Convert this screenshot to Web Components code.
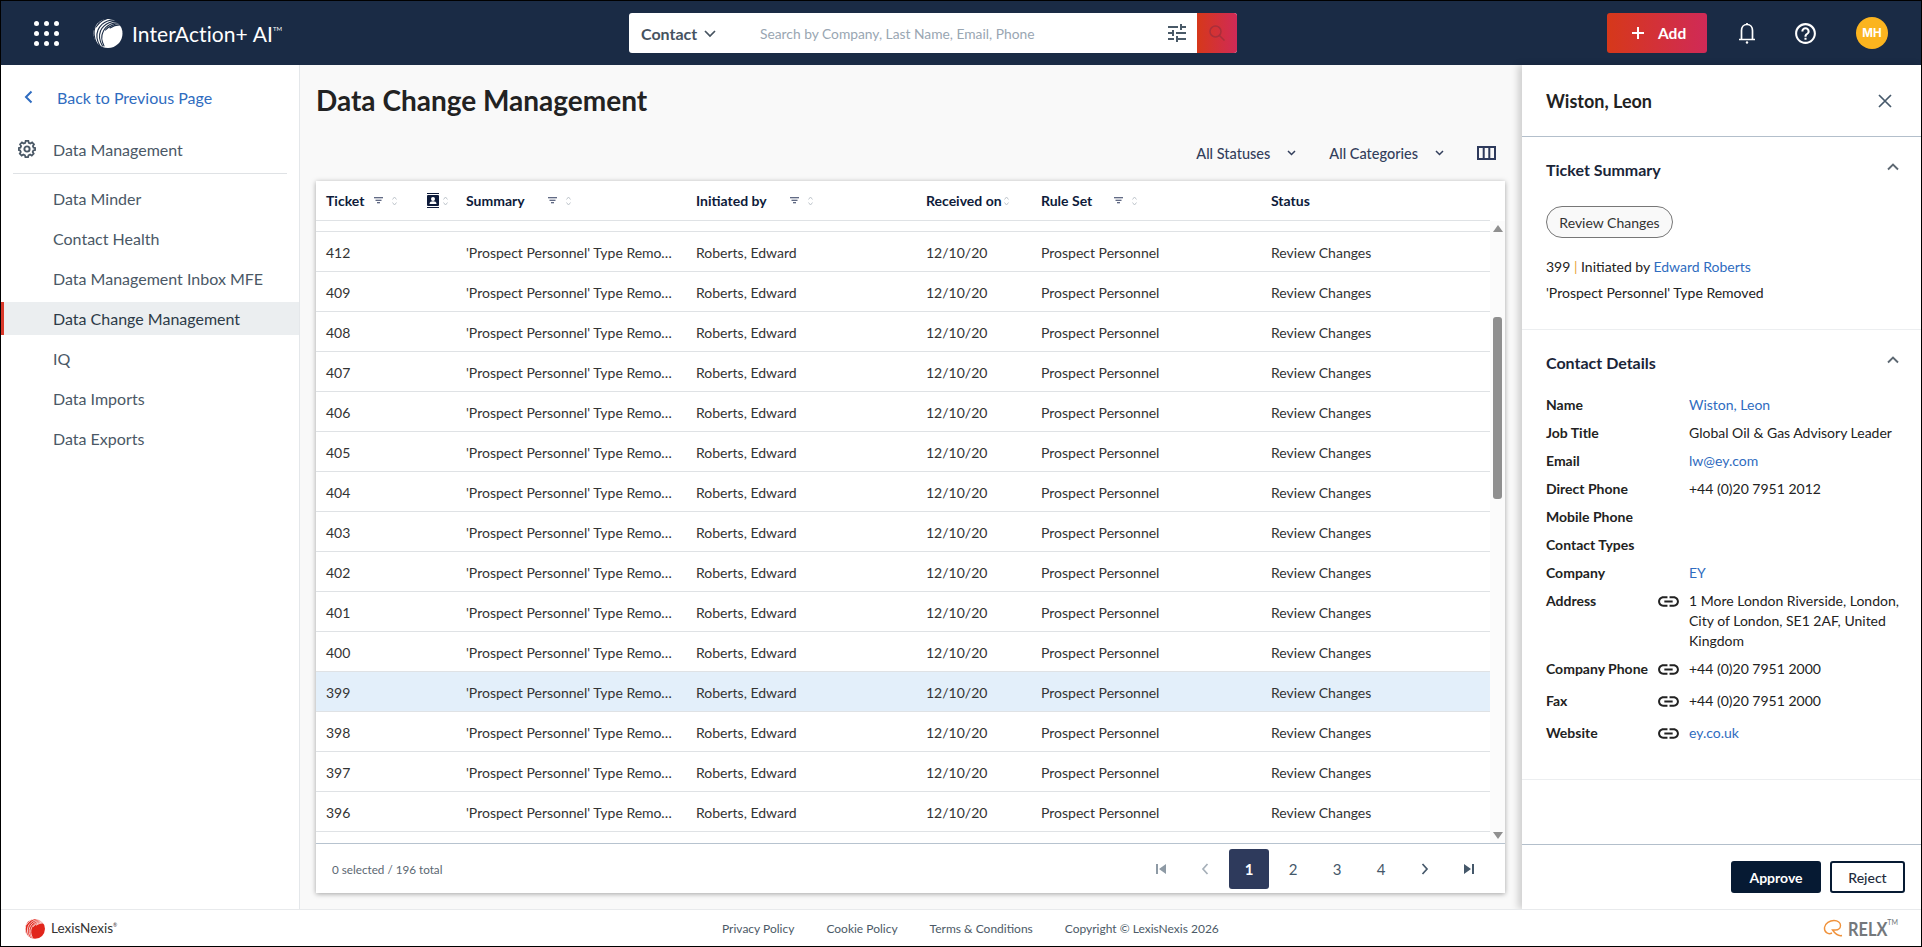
<!DOCTYPE html>
<html lang="en"><head><meta charset="utf-8"><title>Data Change Management</title>
<style>
html,body{margin:0;padding:0;height:947px;overflow:hidden;font-family:Lato,"Noto Sans",sans-serif;font-size:14px;color:#222}
</style></head><body>
<app-shell>
  <app-header slot="header"></app-header>
  <side-nav slot="nav">
    <nav-item>Data Minder</nav-item>
    <nav-item>Contact Health</nav-item>
    <nav-item>Data Management Inbox MFE</nav-item>
    <nav-item active>Data Change Management</nav-item>
    <nav-item>IQ</nav-item>
    <nav-item>Data Imports</nav-item>
    <nav-item>Data Exports</nav-item>
  </side-nav>
  <main-area slot="main">
    <ticket-table id="tbl"></ticket-table>
  </main-area>
  <detail-panel slot="panel">
    <panel-section heading="Ticket Summary" style="--sec-h:193px;--pad:24px">
      <status-pill>Review Changes</status-pill>
      <summary-line>399 <span style="color:#e8a33d">|</span> Initiated by <a style="color:#2f6cc0">Edward Roberts</a></summary-line>
      <summary-line>'Prospect Personnel' Type Removed</summary-line>
    </panel-section>
    <panel-section heading="Contact Details" style="--sec-h:450px;--pad:20px">
      <detail-row label="Name"><a style="color:#2f6cc0">Wiston, Leon</a></detail-row>
      <detail-row label="Job Title">Global Oil &amp; Gas Advisory Leader</detail-row>
      <detail-row label="Email"><a style="color:#2f6cc0">lw@ey.com</a></detail-row>
      <detail-row label="Direct Phone">+44 (0)20 7951 2012</detail-row>
      <detail-row label="Mobile Phone"></detail-row>
      <detail-row label="Contact Types"></detail-row>
      <detail-row label="Company"><a style="color:#2f6cc0">EY</a></detail-row>
      <detail-row label="Address" link>1 More London Riverside, London, City of London, SE1 2AF, United Kingdom</detail-row>
      <detail-row label="Company Phone" link tall>+44 (0)20 7951 2000</detail-row>
      <detail-row label="Fax" link tall>+44 (0)20 7951 2000</detail-row>
      <detail-row label="Website" link tall><a style="color:#2f6cc0">ey.co.uk</a></detail-row>
    </panel-section>
  </detail-panel>
  <app-footer slot="footer"></app-footer>
</app-shell>
<script>
function def(name, html, setup){
  customElements.define(name, class extends HTMLElement{
    constructor(){super();this.attachShadow({mode:'open'}).innerHTML=html;}
    connectedCallback(){ if(setup&&!this._d){this._d=1;setup(this,this.shadowRoot);} }
  });
}
const globe=(fill,cut)=>`<svg viewBox="0 0 32 32" width="100%" height="100%"><circle cx="16" cy="16.5" r="14.5" fill="${fill}"/><g fill="none" stroke="${cut}" stroke-width="1.1" stroke-linecap="round"><path d="M29 4C20 1 10 4 6 13c-2 5-1 11 2 16"/><path d="M29 5C21 3 12 6 8.500 14c-2 5-1 10 2 15"/><path d="M29 6C22 4.500 14 8 11 15c-2 4-1.500 9 1 14"/><path d="M29 7C24 6 17 9 13.500 13"/><path d="M3 10C1.500 14 1.500 21 5 27"/><path d="M29 8C25 7.500 21 9 18 11"/><path d="M20 1C14 1 8 4 4 10"/></g></svg>`;
def('app-shell',`<style>
:host{display:grid;box-sizing:border-box;width:1922px;height:947px;border:1px solid #000;grid-template-rows:64px 844px 37px;grid-template-columns:299px 1fr 399px;background:#fff}
::slotted([slot=header]),::slotted([slot=footer]){grid-column:1/-1}
</style><slot name="header"></slot><slot name="nav"></slot><slot name="main"></slot><slot name="panel"></slot><slot name="footer"></slot>`);

def('app-header',`<style>
:host{display:flex;align-items:center;background:#1a2b45;height:64px;color:#fff;position:relative}
.grid{display:grid;grid-template-columns:repeat(3,5px);gap:5px;margin-left:33px;width:25px}
.grid i{width:5px;height:5px;border-radius:50%;background:#fff}
.logo{width:32px;height:32px;margin-left:33px}
.brand{font-size:21px;letter-spacing:.1px;margin-left:8px;line-height:1;white-space:nowrap;width:497px}
.brand sup{font-size:6px;vertical-align:11px;line-height:0}
.search{display:flex;width:608px;height:40px;background:#fff;border-radius:3px;overflow:hidden;align-items:center;color:#4a5a68}
.ct{font-size:16px;font-weight:700;color:#46535f;margin-left:12px;width:62px}
.chev{width:14px;height:9px}
.ph{font-size:13.800px;color:#99a6b2;margin-left:43px;width:405px;white-space:nowrap}
.tune{width:24px;height:24px}
.go{margin-left:auto;width:40px;height:40px;background:linear-gradient(90deg,#d6381a,#d02a57);display:flex;align-items:center;justify-content:center}
.add{display:flex;align-items:center;height:40px;width:100px;margin-left:370px;background:linear-gradient(90deg,#d6381a,#d02a57);border-radius:3px;font-weight:700;font-size:15.500px;box-sizing:border-box;padding-left:24px}
.add svg{margin-right:13px}
.bell{margin-left:28px;width:24px;height:24px}
.help{margin-left:34px;width:25px;height:25px}
.av{margin-left:38px;width:32px;height:32px;border-radius:50%;background:#fbb41f;font:700 11.500px Inter,sans-serif;display:flex;align-items:center;justify-content:center;color:#fff}
</style>
<div class="grid"><i></i><i></i><i></i><i></i><i></i><i></i><i></i><i></i><i></i></div>
<div class="logo">${globe('#fff','#1a2b45')}</div>
<div class="brand">InterAction+ AI<sup>TM</sup></div>
<div class="search"><span class="ct">Contact</span><svg class="chev" viewBox="0 0 14 9"><path d="M2 2l5 5 5-5" fill="none" stroke="#46535f" stroke-width="1.700"/></svg>
<span class="ph">Search by Company, Last Name, Email, Phone</span>
<svg class="tune" viewBox="0 0 24 24" fill="#4a5a68"><path d="M3 17v2h6v-2H3zM3 5v2h10V5H3zm10 16v-2h8v-2h-8v-2h-2v6h2zM7 9v2H3v2h4v2h2V9H7zm14 4v-2H11v2h10zm-6-4h2V7h4V5h-4V3h-2v6z"/></svg>
<div class="go"><svg width="20" height="20" viewBox="0 0 20 20" fill="none" stroke="#a92f3a" stroke-width="1.500"><circle cx="8.500" cy="8.500" r="5.500"/><path d="M12.500 12.500l5 5"/></svg></div></div>
<div class="add"><svg width="14" height="14" viewBox="0 0 14 14"><path d="M7 1v12M1 7h12" stroke="#fff" stroke-width="2"/></svg>Add</div>
<svg class="bell" viewBox="0 0 24 24" fill="none" stroke="#fff" stroke-width="1.700"><path d="M12 3.500c-3.500 0-5.500 2.800-5.500 6V18M12 3.500c3.500 0 5.500 2.800 5.500 6V18M4 18.500h16"/><circle cx="12" cy="21.500" r="1.200" fill="#fff" stroke="none"/><path d="M12 2v2"/></svg>
<svg class="help" viewBox="0 0 24 24" fill="#fff"><path d="M11 18h2v-2h-2v2zm1-16C6.480 2 2 6.480 2 12s4.480 10 10 10 10-4.480 10-10S17.520 2 12 2zm0 18c-4.410 0-8-3.590-8-8s3.590-8 8-8 8 3.590 8 8-3.590 8-8 8zm0-14c-2.210 0-4 1.790-4 4h2c0-1.100.9-2 2-2s2 .9 2 2c0 2-3 1.750-3 5h2c0-2.250 3-2.500 3-5 0-2.210-1.790-4-4-4z"/></svg>
<div class="av">MH</div>`);

def('side-nav',`<style>
:host{display:block;border-right:1px solid #e4e7ea;background:#fff;box-sizing:border-box;height:844px;overflow:hidden}
.back{display:flex;align-items:center;height:40px;margin-top:12px;color:#2f6cc0;font-size:16px}
.back svg{margin-left:23px;margin-right:24px}
.hd{display:flex;align-items:center;height:40px;margin:12px 12px 0 12px;border-bottom:1px solid #dfe2e5;padding-bottom:4px;color:#4a5866;font-size:16px;box-sizing:content-box}
.hd svg{margin-left:5px;margin-right:17px}
.list{padding-top:8px}
</style>
<div class="back"><svg width="9" height="14" viewBox="0 0 9 14"><path d="M7.500 1.500L2 7l5.500 5.500" fill="none" stroke="#2f6cc0" stroke-width="2"/></svg>Back to Previous Page</div>
<div class="hd"><svg width="18" height="18" viewBox="0 0 24 24" fill="none" stroke="#4a5866" stroke-width="2.600"><circle cx="12" cy="12" r="3.500"/><path d="M10 2h4l.6 3 2.400 1 2.600-1.700 2.800 2.800L20.700 9.700l1 2.300 2.300.5v3l-2.600.6-1 2.400 1.500 2.500-2.800 2.800-2.500-1.500-2.400 1-.6 2.700h-4l-.6-2.700-2.400-1-2.500 1.500-2.800-2.800 1.500-2.500-1-2.400L0 15.500v-3l2.300-.5 1-2.300L1.700 7.100l2.800-2.800L7 6l2.400-1z" transform="translate(1.200 -.6) scale(.9)"/></svg>Data Management</div>
<div class="list"><slot></slot></div>`);

def('nav-item',`<style>
:host{display:block;height:33px;margin-bottom:7px;line-height:33px;padding-left:52px;font-size:16px;color:#4a5866;box-sizing:border-box;border-left:0 solid #d9382a}
:host([active]){background:#ebeef0;color:#2d3b48;border-left:3px solid #d9382a;padding-left:49px}
</style><slot></slot>`);

def('main-area',`<style>
:host{display:flex;flex-direction:column;background:#f9f9f9;padding:0 17px 16px 16px;box-sizing:border-box;height:844px;min-width:0}
h1{margin:0;font-size:28px;font-weight:700;color:#222;height:35px;line-height:35px;margin-top:18px;letter-spacing:0}
.tools{display:flex;align-items:center;height:20px;margin-top:25px;justify-content:flex-end;color:#333f5c;font-size:14.500px;font-weight:500;padding-right:9px;margin-bottom:18px}
.tools svg.c{margin:0 0 0 17px}
.tools .gap{width:33px}
.tools .gap2{width:33px}
</style>
<h1>Data Change Management</h1>
<div class="tools"><span>All Statuses</span><svg class="c" width="9" height="6" viewBox="0 0 9 6"><path d="M1 1l3.500 3.500L8 1" fill="none" stroke="#333f5c" stroke-width="1.500"/></svg><span class="gap"></span><span>All Categories</span><svg class="c" width="9" height="6" viewBox="0 0 9 6"><path d="M1 1l3.500 3.500L8 1" fill="none" stroke="#333f5c" stroke-width="1.500"/></svg><span class="gap2"></span><svg width="19" height="14" viewBox="0 0 19 14" fill="none" stroke="#2e3a5c" stroke-width="2"><path d="M1 1h17v12H1zM6.700 1v12M12.300 1v12"/></svg></div>
<slot></slot>`);

const COLS='101px 39px 230px 230px 115px 230px 229px';
const filt=`<svg width="9" height="7" viewBox="0 0 9 7" style="flex:none"><path d="M0 .75h9M1.500 3.250h6M3 5.750h3" stroke="#2e3a5c" stroke-width="1.200"/></svg>`;
const sort=`<svg width="5" height="10" viewBox="0 0 5 10" style="flex:none"><path d="M.5 3.500L2.500 1l2 2.500M.5 6.500L2.500 9l2-2.500" fill="none" stroke="#b9bfc6" stroke-width=".9"/></svg>`;
const th=(t,g)=>`<div class="th"><b>${t}</b>${g!=null?`<span style="width:${g}px;flex:none"></span>${filt}<span style="width:9px;flex:none"></span>`:`<span style="width:2px;flex:none"></span>`}${sort}</div>`;

def('ticket-table',`<style>
:host{display:flex;flex-direction:column;height:712px;background:#fff;box-shadow:0 1px 5px rgba(0,0,0,.35);position:relative}
.head{display:grid;grid-template-columns:${COLS};height:39px;border-bottom:1px solid #dfe2e5;align-items:center;width:1174px;box-sizing:content-box;flex:none}
.th{display:flex;align-items:center;padding-left:10px;font-size:14px;white-space:nowrap;color:#0e1b3a}
.th b{font-weight:700}
.sp{height:10px;border-bottom:1px solid #dfe2e5;width:1174px}
.body{position:relative;flex:1;display:flex;flex-direction:column;border-bottom:1px solid #b7c3cf;min-height:0}
.rows{width:1174px}
.foot{height:49px;display:flex;align-items:center;font-size:11.700px;color:#5b6772;padding-left:16px;flex:none}
.pg{margin-left:auto;display:flex;gap:4px;margin-right:16px}
.pg div{width:40px;height:40px;display:flex;align-items:center;justify-content:center;font-size:15px;color:#45586a;border-radius:3px}
.pg .on{background:#2e3a5c;color:#fff;font-weight:700}
.track{position:absolute;right:0;top:0;bottom:0;width:15px;background:#fbfbfb}
.thumb{position:absolute;left:3px;top:96px;width:9px;height:182px;background:#8f8f8f;border-radius:3px}
.u,.d{position:absolute;left:3px;width:0;height:0;border-left:5px solid transparent;border-right:5px solid transparent}
.u{top:4px;border-bottom:7px solid #8f8f8f}.d{bottom:4px;border-top:7px solid #8f8f8f}
</style>
<div class="head">
${th('Ticket',10)}
<div class="th"><svg width="12" height="15" viewBox="0 0 12 15" style="flex:none"><path d="M0 0h12v1H0zM0 14h12v1H0z" fill="#0e1b3a"/><rect y="2" width="12" height="11" rx="1" fill="#0e1b3a"/><circle cx="6" cy="6" r="2" fill="#fff"/><path d="M2.500 11c0-2 1.500-2.700 3.500-2.700s3.500.7 3.500 2.700z" fill="#fff"/></svg><span style="width:4px;flex:none"></span>${sort}</div>
${th('Summary',23)}
${th('Initiated by',23)}
${th('Received on')}
${th('Rule Set',22)}
<div class="th"><b>Status</b></div>
</div>
<div class="body">
<div class="sp"></div>
<div class="rows"><slot></slot></div>
<div class="track"><div class="u"></div><div class="thumb"></div><div class="d"></div></div>
</div>
<div class="foot"><span>0 selected / 196 total</span><div class="pg">
<div><svg width="12" height="12" viewBox="0 0 12 12" fill="#8e9aa5"><path d="M1 1h2v10H1zM11 1v10L4 6z"/></svg></div>
<div><svg width="8" height="12" viewBox="0 0 8 12"><path d="M6.500 1L2 6l4.500 5" fill="none" stroke="#a6b0b9" stroke-width="1.700"/></svg></div>
<div class="on">1</div><div>2</div><div>3</div><div>4</div>
<div><svg width="8" height="12" viewBox="0 0 8 12"><path d="M1.500 1L6 6l-4.500 5" fill="none" stroke="#45586a" stroke-width="1.700"/></svg></div>
<div><svg width="12" height="12" viewBox="0 0 12 12" fill="#45586a"><path d="M11 1H9v10h2zM1 1v10l7-5z"/></svg></div>
</div></div>`,
(el)=>{
  [412,409,408,407,406,405,404,403,402,401,400,399,398,397,396].forEach(n=>{
    const r=document.createElement('ticket-row');
    r.setAttribute('ticket',n);
    if(n===399) r.setAttribute('selected','');
    el.appendChild(r);
  });
});

def('ticket-row',`<style>
:host{display:grid;grid-template-columns:${COLS};height:40px;box-sizing:border-box;border-bottom:1px solid #dfe2e5;align-items:center;font-size:14px;color:#333;padding-top:2px}
:host([selected]){background:#e3effa}
div{padding-left:10px;white-space:nowrap;overflow:hidden}
.s{text-overflow:ellipsis;padding-right:14px}
</style><div id="t"></div><div></div><div class="s">'Prospect Personnel' Type Removed</div><div>Roberts, Edward</div><div>12/10/20</div><div>Prospect Personnel</div><div>Review Changes</div>`,
(el,s)=>{s.getElementById('t').textContent=el.getAttribute('ticket');});

def('detail-panel',`<style>
:host{display:flex;flex-direction:column;height:844px;background:#fff;box-shadow:-4px 0 7px rgba(0,0,0,.17);position:relative;box-sizing:border-box}
.top{display:flex;align-items:center;height:72px;box-sizing:border-box;border-bottom:1px solid #b3bfcb;padding:0 28px 0 24px;flex:none}
.top b{font-size:18px;font-weight:700;color:#222;flex:1}
.sc{flex:1;min-height:0}
.foot{flex:none;height:65px;border-top:1px solid #b3bfcb;box-sizing:border-box;display:flex;align-items:center;justify-content:flex-end;padding:0 16px 0;gap:9px}
.btn{height:32px;box-sizing:border-box;border-radius:3px;display:flex;align-items:center;justify-content:center;font-size:14px;font-weight:700}
.a{width:90px;background:#061a33;color:#fff}
.r{width:75px;border:2px solid #061a33;color:#222b3c;font-weight:500}
</style>
<div class="top"><b>Wiston, Leon</b><svg width="16" height="16" viewBox="0 0 16 16"><path d="M2 2l12 12M14 2L2 14" stroke="#46596b" stroke-width="1.700"/></svg></div>
<div class="sc"><slot></slot></div>
<div class="foot"><div class="btn a">Approve</div><div class="btn r">Reject</div></div>`);

def('panel-section',`<style>
:host{display:block;height:var(--sec-h);border-bottom:1px solid #eceef0;box-sizing:border-box;padding:21px 22px 0 24px}
.h{display:flex;align-items:center;height:24px;justify-content:space-between}
h2{margin:0;font-size:16px;font-weight:700;color:#1a2538;line-height:24px}
.h svg{margin-top:-7px}
.c{padding-top:var(--pad)}
</style><div class="h"><h2 id="h"></h2><svg width="12" height="8" viewBox="0 0 12 8"><path d="M1 6.500l5-5 5 5" fill="none" stroke="#5d6872" stroke-width="1.900"/></svg></div><div class="c"><slot></slot></div>`,
(el,s)=>{s.getElementById('h').textContent=el.getAttribute('heading');});

def('status-pill',`<style>
:host{display:flex;align-items:center;justify-content:center;box-sizing:border-box;height:32px;width:127px;border:1px solid #777;border-radius:16px;background:#f9f9f9;font-size:14px;color:#333;margin-bottom:16px}
</style><slot></slot>`);
def('summary-line',`<style>
:host{display:block;font-size:14px;line-height:26px;color:#222}
</style><slot></slot>`);

def('detail-row',`<style>
:host{display:grid;grid-template-columns:143px 1fr;font-size:14px;line-height:20px;color:#222;padding-bottom:8px;position:relative}
:host([tall]){padding-bottom:12px}
.l{font-weight:700;color:#222;display:flex;white-space:nowrap;position:relative}
svg{position:absolute;left:110px;top:-2px;display:none}
:host([link]) svg{display:block}
</style><div class="l"><span id="l"></span><svg width="25" height="25" viewBox="0 0 24 24" fill="#222"><path d="M3.900 12c0-1.710 1.390-3.100 3.100-3.100h4V7H7c-2.760 0-5 2.240-5 5s2.240 5 5 5h4v-1.900H7c-1.710 0-3.100-1.390-3.100-3.100zM8 13h8v-2H8v2zm9-6h-4v1.900h4c1.710 0 3.100 1.390 3.100 3.100s-1.390 3.100-3.100 3.100h-4V17h4c2.760 0 5-2.240 5-5s-2.240-5-5-5z"/></svg></div><div><slot></slot></div>`,
(el,s)=>{s.getElementById('l').textContent=el.getAttribute('label');});

def('app-footer',`<style>
:host{display:flex;align-items:center;height:37px;box-sizing:border-box;border-top:1px solid #e8eaec;background:#fff;font-size:12px;color:#4c5a67;position:relative}
.lx{width:22px;height:23px;margin-left:23px}
.ln{font-size:13.500px;color:#333;margin-left:5px;width:660px}
.ln sup{font-size:5px;vertical-align:6px;line-height:0}
span.k{white-space:nowrap}
.relx{margin-left:auto;display:flex;align-items:center;margin-right:23px;color:#74787c;font-size:19px;font-weight:700}
.relx b{display:inline-block;width:39px;transform:scaleX(.86);transform-origin:0 50%;font-weight:700;white-space:nowrap}
.relx sup{font-size:7px;align-self:flex-start;line-height:10px;font-weight:400}
.relx svg{margin-right:5px}
</style>
<div class="lx">${globe('#e1251b','#fff')}</div><div class="ln">LexisNexis<sup>®</sup></div>
<span class="k" style="margin-left:11px">Privacy Policy</span><span class="k" style="margin-left:32px">Cookie Policy</span><span class="k" style="margin-left:32px">Terms &amp; Conditions</span><span class="k" style="margin-left:32px">Copyright © LexisNexis 2026</span>
<div class="relx"><svg width="20" height="20" viewBox="0 0 20 20" fill="none" stroke="#f0923b" stroke-width="1.400"><path d="M19 17.500c-4 1-7-2-9.500-5.500h3c3 0 5-2 5-4.500S15 2.500 11 2.500 2 5 1.500 9.500 5 17 9 15"/></svg><b>RELX</b><sup>TM</sup></div>`);
</script>
</body></html>
